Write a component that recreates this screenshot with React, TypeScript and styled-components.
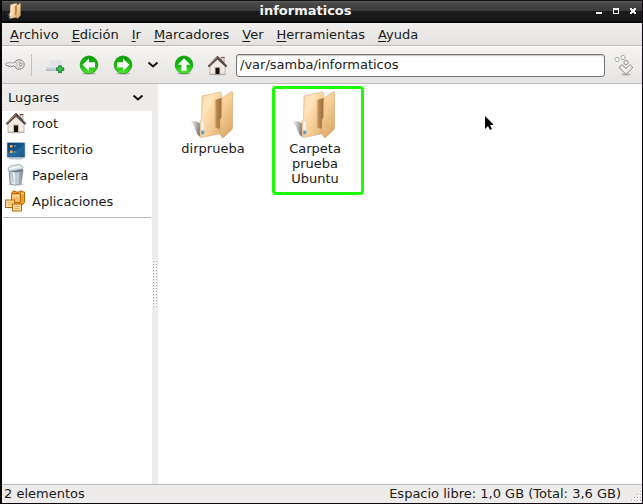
import React from "react";
import styled, { createGlobalStyle } from "styled-components";

const GlobalStyle = createGlobalStyle`
  * { box-sizing: border-box; }
  body { margin: 0; background: #000; }
  body, button, input {
    font-family: "DejaVu Sans", sans-serif;
    font-size: 13px;
    color: #1a1a1a;
  }
  button { padding: 0; border: 0; background: none; }
  svg { display: block; flex: none; }
`;

const Window = styled.div`
  display: flex;
  flex-direction: column;
  min-height: 100vh;
  padding: 0 1px 1px 2px;
  background: #08060a;
  cursor: default;
`;

const TitleBar = styled.header`
  display: flex;
  align-items: center;
  height: 23px;
  padding: 0 3px 0 4px;
  border-top: 1px solid #111;
  border-bottom: 2px solid #080808;
  background: linear-gradient(#606060 0, #484848 2px, #3a3a3a 10px, #1b1b1b 10px, #181818 100%);
`;

const WindowButtons = styled.div`
  display: flex;
  flex: none;
  gap: 5px;
`;

const Title = styled.h1`
  flex: 1;
  margin: 0;
  padding-right: 4px;
  color: #f4f4f4;
  font-size: 13px;
  line-height: 16px;
  text-align: center;
`;

const WindowButton = styled.button`
  width: 12px;
  height: 12px;
`;

const MenuBar = styled.nav`
  display: flex;
  gap: 1px;
  height: 23px;
  padding: 0 2px;
  border-bottom: 1px solid #bdbbb9;
  background: linear-gradient(#efeeed, #e4e3e1);
`;

const MenuItem = styled.button`
  padding: 1px 6px 0;
  line-height: 22px;

  &::first-letter {
    text-decoration: underline;
    text-underline-offset: 2px;
  }
`;

const ToolBar = styled.div`
  display: flex;
  align-items: center;
  height: 38px;
  padding: 0 8px 0 3px;
  border-top: 1px solid #fff;
  border-bottom: 1px solid #c0bebc;
  background: linear-gradient(#f5f4f3, #e5e4e2);
`;

const Separator = styled.div`
  width: 1px;
  height: 22px;
  margin: 0 14px 0 6px;
  background: #c3c1bf;
`;

const ToolButton = styled.button<{ $gap?: number }>`
  flex: none;
  margin-right: ${(p) => p.$gap ?? 0}px;
`;

const AddressInput = styled.input`
  flex: 1;
  min-width: 0;
  height: 23px;
  margin-right: 9px;
  padding: 0 3px 1px;
  border: 1px solid #777471;
  border-radius: 3px;
  outline: 0;
  background: #fff;
  box-shadow: inset 0 1px 1px #cccac8;
`;

const Body = styled.div`
  display: flex;
  flex: 1;
`;

const Sidebar = styled.aside`
  flex: none;
  width: 150px;
  background: #fff;
`;

const SidebarHeader = styled.button`
  display: flex;
  align-items: center;
  justify-content: space-between;
  width: 100%;
  height: 27px;
  padding: 0 8px 0 6px;
  background: #edeceb;
`;

const Places = styled.ul`
  margin: 0 1px;
  padding: 0 0 2px;
  border-bottom: 1px solid #b9b7b5;
  list-style: none;
`;

const Place = styled.a`
  display: flex;
  align-items: center;
  gap: 5px;
  height: 26px;
  padding: 0 0 2px 2px;
  color: inherit;
  text-decoration: none;
  cursor: default;
`;

const Splitter = styled.div`
  display: flex;
  flex: none;
  align-items: center;
  justify-content: center;
  width: 6px;
  background: #edeceb;
`;

const FileArea = styled.main`
  position: relative;
  display: flex;
  flex: 1;
  flex-wrap: wrap;
  align-content: flex-start;
  min-width: 0;
  padding: 7px 4px;
  background: #fff;
`;

const FileItem = styled.a`
  position: relative;
  display: flex;
  flex-direction: column;
  align-items: center;
  gap: 2px;
  width: 102px;
  padding: 0 15px;
  color: inherit;
  line-height: 15px;
  text-align: center;
  text-decoration: none;
  cursor: default;
`;

const Highlight = styled.span`
  position: absolute;
  inset: -5px 2px -9px 8px;
  border: 3px solid #1cff00;
  border-radius: 4px;
`;

const Pointer = styled.svg`
  position: absolute;
  top: 32px;
  left: 327px;
  pointer-events: none;
`;

const StatusBar = styled.footer`
  display: flex;
  align-items: center;
  justify-content: space-between;
  height: 19px;
  padding-left: 2px;
  border-top: 1px solid #bcbab8;
  background: #edeceb;
  line-height: 18px;
`;

const StatusEnd = styled.div`
  display: flex;
  align-items: flex-end;
  gap: 10px;
`;

function FolderIcon({ size, id }: { size: number; id: string }) {
  const url = (n: string) => `url(#${id}-${n})`;
  return (
    <svg width={size} height={size} viewBox="0 0 48 48" aria-hidden="true">
      <defs>
        <linearGradient id={`${id}-back`} x1="0" y1="0" x2="1" y2="1">
          <stop offset="0" stopColor="#f4cf98" />
          <stop offset=".35" stopColor="#ffe0b2" />
          <stop offset=".7" stopColor="#f2c88f" />
          <stop offset="1" stopColor="#e0ab6b" />
        </linearGradient>
        <linearGradient id={`${id}-front`} x1="0" y1="0" x2=".4" y2="1">
          <stop offset="0" stopColor="#ffdfb0" />
          <stop offset=".5" stopColor="#f3c98f" />
          <stop offset="1" stopColor="#dfab6c" />
        </linearGradient>
        <linearGradient id={`${id}-gap`}>
          <stop offset="0" stopColor="#c99a60" stopOpacity="0" />
          <stop offset=".35" stopColor="#b98a53" />
          <stop offset="1" stopColor="#9a6c3b" />
        </linearGradient>
        <linearGradient id={`${id}-shade`} x1="0" y1=".4" x2="1" y2=".6">
          <stop offset="0" stopColor="#777" stopOpacity=".05" />
          <stop offset="1" stopColor="#555" stopOpacity=".9" />
        </linearGradient>
      </defs>
      <path d="M1 30 Q7 29 12 33 L12 46 Q8 45 7 40 Q5 34 1 30 Z" fill={url("shade")} />
      <path d="M13 5 L31 1 Q32.5 1 32.5 2.5 L32.5 42.5 L13 46.5 Q11 47 11 44 L11 30 L12.5 28 Z" fill={url("back")} stroke="#dcb27c" strokeWidth=".6" />
      <path d="M14 6 L24 4 Q21 17 14 25 Z" fill="#fff1d6" opacity=".35" />
      <path d="M25 9 L32.5 7 V34 L30 38 L25 36 Z" fill={url("gap")} />
      <path d="M33 7 L42 1 Q43.5 0 43.5 2 L43.5 36 Q43.5 38 42.5 39 L34.5 46.5 Q33.5 47.5 33 46 L31 43 L31 29 L32.5 26 Z" fill={url("front")} stroke="#d2a266" strokeWidth=".6" />
      <path d="M12 31 Q13.5 28.5 15.3 30.5 L15.3 43 L12 44 Z" fill="#f6f7f5" stroke="#d6b98f" strokeWidth=".4" />
      <path d="M12.3 39.5 H15.1 V43 L12.3 43.6 Z" fill="#5b9fca" />
    </svg>
  );
}

function HouseIcon({ size = 22 }: { size?: number }) {
  return (
    <svg width={size} height={size} viewBox="0 0 22 22" aria-hidden="true">
      <ellipse cx="11" cy="20.3" rx="9" ry="1" fill="#777" opacity=".45" />
      <path d="M15 3 H18 V8 L15 5 Z" fill="#e4ddd5" stroke="#8b7b70" strokeWidth=".6" />
      <path d="M14.6 2.5 H18.5" stroke="#963d28" />
      <path d="M3 10 L11 2.5 L19 10 V20 H3 Z" fill="#f2ece2" stroke="#aaa095" strokeWidth=".7" />
      <path d="M1 11.5 L10.4 1.5 H11.6 L21 11.5 L19.7 12.5 L11 4.5 L2.3 12.5 Z" fill="#5b4840" stroke="#3d302c" strokeWidth=".5" />
      <path d="M2.5 10.6 L10.6 2.3" stroke="#bba79b" strokeWidth=".8" />
      <path d="M8 20 V12.5 H14 V20" fill="#c6baa9" />
      <rect x="9" y="13.5" width="4" height="6.5" fill="#171311" />
    </svg>
  );
}

function DesktopIcon() {
  return (
    <svg width="22" height="22" viewBox="0 0 22 22" aria-hidden="true">
      <defs>
        <linearGradient id="screen" x1="0" y1="0" x2="1" y2="1">
          <stop offset="0" stopColor="#063767" />
          <stop offset=".55" stopColor="#185c91" />
          <stop offset="1" stopColor="#07345d" />
        </linearGradient>
      </defs>
      <path d="M2 19 H20 L17 21.5 H5 Z" fill="#aebbc5" opacity=".8" />
      <rect x="2" y="4.5" width="18" height="15" rx="1" fill="url(#screen)" stroke="#b4c4d2" strokeWidth=".7" />
      <path d="M2.5 14 Q13 14 19.5 7 V19 H2.5 Z" fill="#4390bd" opacity=".35" />
      <path d="M5 7 H7.5 V9.5 H5 Z M5 12.5 H7.5 V15 H5 Z" fill="#f3b45a" />
      <path d="M9 8 H11 M9 14 H10.5" stroke="#9cc5de" strokeWidth=".8" />
    </svg>
  );
}

function TrashIcon() {
  return (
    <svg width="22" height="22" viewBox="0 0 22 22" aria-hidden="true">
      <defs>
        <linearGradient id="can">
          <stop offset="0" stopColor="#8fa0ac" />
          <stop offset=".3" stopColor="#f2f6f8" />
          <stop offset=".65" stopColor="#c3d0d8" />
          <stop offset="1" stopColor="#71838e" />
        </linearGradient>
      </defs>
      <ellipse cx="11" cy="20.5" rx="8" ry="1.2" fill="#777" opacity=".35" />
      <path d="M4 6 L5 20 Q10 22 16 20 L18 6 Z" fill="url(#can)" stroke="#788a95" strokeWidth=".7" />
      <path d="M7.5 9 L8 19 M11 9 V20 M14.8 8 L14 19" stroke="#93a4ae" strokeWidth=".7" />
      <ellipse cx="11" cy="6.2" rx="7.4" ry="2.2" fill="#6f838f" />
      <path d="M3 6 Q3 2 8 1.5 L14 0.5 Q17 1 18 3.5 L17 5 L4 7.5 Z" fill="#dce5e9" stroke="#8798a2" strokeWidth=".7" />
      <path d="M5 4.5 L15 2.5" stroke="#fff" />
    </svg>
  );
}

function AppsIcon() {
  return (
    <svg width="22" height="22" viewBox="0 0 22 22" aria-hidden="true">
      <g stroke="#b86805" strokeWidth="1">
        <path d="M6.5 3.5 L8 1 H10 L11 2 H14 L15 1 H17 L18 2 H19.5 V12.5 L17 15 H6.5 Z" fill="#ef9f2d" />
        <path d="M6.5 3.5 H15.5 V12.5 H6.5 Z" fill="#f6bd68" />
        <path d="M8 6 H14 M16 4 L19 3" stroke="#ffe3b0" />
        <rect x=".5" y="10" width="9" height="7.5" fill="#ffdca4" />
        <rect x="7.5" y="14" width="9" height="7" fill="#ffdfa9" />
      </g>
      <path d="M2.5 12.5 H8 M2.5 14.5 H7 M9.5 16.5 H15 M9.5 18.5 H15" stroke="#f3ad51" strokeWidth="1" />
    </svg>
  );
}

function KeyIcon() {
  return (
    <svg width="20" height="14" viewBox="0 0 20 14" aria-hidden="true">
      <path d="M9.5 5 H1.8 L.7 6.5 L2 8 L3.2 7.3 L4.2 9 L5.4 7.5 L6.8 9 L8 8 H9.5 A5 4.8 0 1 0 9.5 5 Z" fill="#e8e7e5" stroke="#858583" />
      <path d="M2 6 H10" stroke="#fff" />
      <circle cx="14" cy="6.5" r="2.8" fill="none" stroke="#b6b5b3" strokeWidth=".8" />
      <circle cx="15.5" cy="6.5" r="1.3" fill="#fff" stroke="#777" strokeWidth=".8" />
    </svg>
  );
}

function NewTabIcon() {
  return (
    <svg width="20" height="20" viewBox="0 0 20 20" aria-hidden="true">
      <defs>
        <linearGradient id="tab" x1="0" y1="0" x2="0" y2="1">
          <stop offset="0" stopColor="#eceef2" />
          <stop offset="1" stopColor="#aeb5c3" />
        </linearGradient>
      </defs>
      <path d="M4.5 6 Q5 5 6 5 H14 Q15 5 15.4 6 L17 11 H3 Z" fill="#e2e4e9" />
      <rect x="0" y="11" width="18.5" height="5" fill="url(#tab)" />
      <path d="M12.5 10.8 H15.5 V12.8 H17.7 V15.5 H15.5 V17.7 H12.5 V15.5 H10.5 V12.8 H12.5 Z" fill="#20a637" stroke="#087923" strokeWidth=".7" />
      <path d="M14 11.8 V16.5 M11.5 14 H16.5" stroke="#50d45a" />
    </svg>
  );
}

function ArrowIcon({ turn, id }: { turn: number; id: string }) {
  return (
    <svg width="20" height="20" viewBox="0 0 20 20" aria-hidden="true">
      <defs>
        <linearGradient id={id} x1="0" y1="0" x2="0" y2="1">
          <stop offset="0" stopColor="#0b9e08" />
          <stop offset=".55" stopColor="#12bd0a" />
          <stop offset="1" stopColor="#59ec32" />
        </linearGradient>
      </defs>
      <ellipse cx="10" cy="18.5" rx="7" ry="1.1" fill="#777" opacity=".5" />
      <circle cx="10" cy="9.8" r="8.8" fill={`url(#${id})`} stroke="#109c0a" strokeWidth=".8" />
      <path d="M3.5 9.8 L10 3.5 V7.2 H16 V12.4 H10 V16 Z" fill="#fbfdfb" transform={`rotate(${turn} 10 9.8)`} />
    </svg>
  );
}

function Chevron() {
  return (
    <svg width="12" height="8" viewBox="0 0 12 8" aria-hidden="true">
      <path d="M1.5 1.5 L6 5.5 L10.5 1.5" fill="none" stroke="#141414" strokeWidth="2" />
    </svg>
  );
}

function GoIcon() {
  return (
    <svg width="20" height="22" viewBox="0 0 20 22" aria-hidden="true">
      <ellipse cx="12" cy="20.5" rx="4.5" ry="1" fill="#888" opacity=".6" />
      <g fill="#f7f7f6" stroke="#a0a09e" strokeWidth=".9">
        <circle cx="3" cy="5.5" r="2.1" />
        <circle cx="9" cy="3.5" r="2.1" />
        <circle cx="12" cy="8.5" r="2.1" stroke="#858583" />
        <path d="M5.7 12.8 L7.6 11 H8.4 L12 14.5 L15.6 11 H16.4 L18.3 12.8 V14.2 L12 20.3 L5.7 14.2 Z" fill="#eeedec" stroke="#777775" />
      </g>
    </svg>
  );
}

function SplitterGrip() {
  return (
    <svg width="6" height="48" viewBox="0 0 6 48" aria-hidden="true">
      {Array.from({ length: 16 }, (_, i) => (
        <g key={i}>
          <path d={`M0 ${i * 3} h2 v2 h-2 z M3 ${i * 3} h2 v2 h-2 z`} fill="#fff" />
          <path d={`M1 ${i * 3 + 1} h1 v1 h-1 z M4 ${i * 3 + 1} h1 v1 h-1 z`} fill="#a09e9c" />
        </g>
      ))}
    </svg>
  );
}

function ResizeGrip() {
  return (
    <svg width="11" height="12" viewBox="0 0 11 12" aria-hidden="true">
      {[[9, 0], [6, 3], [9, 3], [3, 6], [6, 6], [9, 6], [0, 9], [3, 9], [6, 9], [9, 9]].map(([x, y]) => (
        <g key={`${x}-${y}`}>
          <rect x={x} y={y} width="2" height="2" fill="#fff" />
          <rect x={x} y={y} width="1" height="1" fill="#aaa8a6" />
        </g>
      ))}
    </svg>
  );
}

const menus = ["Archivo", "Edición", "Ir", "Marcadores", "Ver", "Herramientas", "Ayuda"];

const places = [
  { name: "root", icon: <HouseIcon /> },
  { name: "Escritorio", icon: <DesktopIcon /> },
  { name: "Papelera", icon: <TrashIcon /> },
  { name: "Aplicaciones", icon: <AppsIcon /> },
];

const folders = [
  { name: "dirprueba", marked: false },
  { name: "Carpeta prueba Ubuntu", marked: true },
];

export default function App() {
  return (
    <>
      <GlobalStyle />
      <Window>
        <TitleBar>
          <FolderIcon size={16} id="title" />
          <Title>informaticos</Title>
          <WindowButtons>
            <WindowButton aria-label="Minimizar">
              <svg width="12" height="12"><path d="M3 7 H9 V9 H3 Z" fill="#ededed" /></svg>
            </WindowButton>
            <WindowButton aria-label="Maximizar">
              <svg width="12" height="12"><path d="M3 3 H9 V9 H3 Z M4 5 V8 H8 V5 Z" fill="#ededed" fillRule="evenodd" /></svg>
            </WindowButton>
            <WindowButton aria-label="Cerrar">
              <svg width="12" height="12"><path d="M3 3 H5 V4 H7 V3 H9 V5 H8 V7 H9 V9 H7 V8 H5 V9 H3 V7 H4 V5 H3 Z" fill="#ededed" /></svg>
            </WindowButton>
          </WindowButtons>
        </TitleBar>
        <MenuBar>
          {menus.map((m) => <MenuItem key={m}>{m}</MenuItem>)}
        </MenuBar>
        <ToolBar>
          <ToolButton aria-label="Permisos"><KeyIcon /></ToolButton>
          <Separator />
          <ToolButton aria-label="Nueva pestaña" $gap={13}><NewTabIcon /></ToolButton>
          <ToolButton aria-label="Atrás" $gap={14}><ArrowIcon turn={0} id="back" /></ToolButton>
          <ToolButton aria-label="Adelante" $gap={14}><ArrowIcon turn={180} id="forward" /></ToolButton>
          <ToolButton aria-label="Historial" $gap={15}><Chevron /></ToolButton>
          <ToolButton aria-label="Subir" $gap={13}><ArrowIcon turn={90} id="up" /></ToolButton>
          <ToolButton aria-label="Inicio" $gap={8}><HouseIcon size={21} /></ToolButton>
          <AddressInput aria-label="Ruta" defaultValue="/var/samba/informaticos" />
          <ToolButton aria-label="Ir a la ruta"><GoIcon /></ToolButton>
        </ToolBar>
        <Body>
          <Sidebar>
            <SidebarHeader>Lugares<Chevron /></SidebarHeader>
            <Places>
              {places.map((p) => (
                <li key={p.name}><Place href="#">{p.icon}{p.name}</Place></li>
              ))}
            </Places>
          </Sidebar>
          <Splitter><SplitterGrip /></Splitter>
          <FileArea>
            {folders.map((f, i) => (
              <FileItem href="#" key={f.name}>
                <FolderIcon size={48} id={`folder-${i}`} />
                <span>{f.name}</span>
                {f.marked && <Highlight />}
              </FileItem>
            ))}
            <Pointer width="9" height="15" viewBox="0 0 9 15" aria-hidden="true">
              <path d="M0 0 L8 8 V9 H5 L7 13 L5 14 L3 10 L0 13 Z" fill="#000" />
            </Pointer>
          </FileArea>
        </Body>
        <StatusBar>
          <span>2 elementos</span>
          <StatusEnd>
            <span>Espacio libre: 1,0 GB (Total: 3,6 GB)</span>
            <ResizeGrip />
          </StatusEnd>
        </StatusBar>
      </Window>
    </>
  );
}
